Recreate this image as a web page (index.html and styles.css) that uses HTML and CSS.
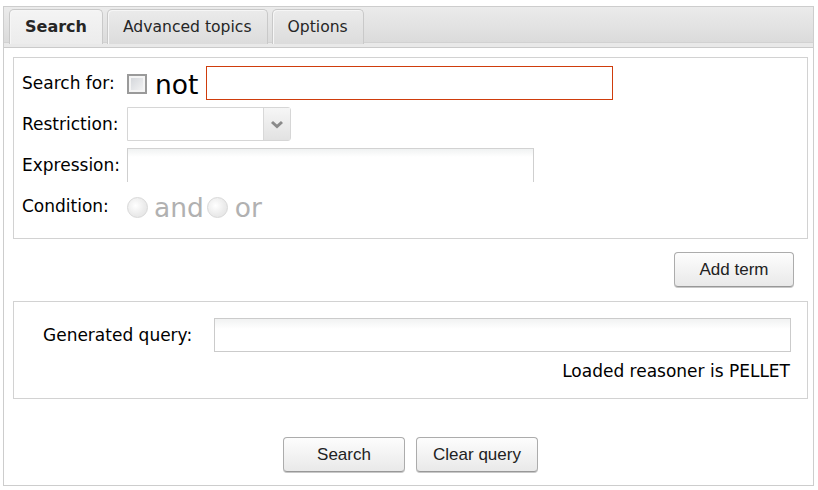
FILE: index.html
```html
<!DOCTYPE html>
<html>
<head>
<meta charset="utf-8">
<link rel="stylesheet" href="styles.css">
</head>
<body>
<div class="widget">
  <div class="tab-bar">
    <div class="tab active">Search</div>
    <div class="tab">Advanced topics</div>
    <div class="tab">Options</div>
  </div>
  <div class="panel">
    <div class="box terms">
      <div class="row">
        <span class="label">Search for:</span>
        <input type="checkbox" class="check">
        <span class="big not">not</span>
        <input type="text" class="text red">
      </div>
      <div class="row">
        <span class="label">Restriction:</span>
        <div class="select"><span class="select-btn"><svg width="14" height="9" viewBox="0 0 14 9"><path d="M2 2 L7 6.5 L12 2" fill="none" stroke="#8a8a8a" stroke-width="3"/></svg></span></div>
      </div>
      <div class="row">
        <span class="label">Expression:</span>
        <input type="text" class="text expr">
      </div>
      <div class="row cond">
        <span class="label">Condition:</span>
        <input type="radio" class="radio" disabled>
        <span class="big grey">and</span>
        <input type="radio" class="radio" disabled>
        <span class="big grey or">or</span>
      </div>
    </div>
    <div class="add-row">
      <button class="btn">Add term</button>
    </div>
    <div class="box query">
      <div class="qrow">
        <span class="qlabel">Generated query:</span>
        <input type="text" class="text qinput">
      </div>
      <div class="reasoner">Loaded reasoner is PELLET</div>
    </div>
    <div class="actions">
      <button class="btn">Search</button>
      <button class="btn">Clear query</button>
    </div>
  </div>
</div>
</body>
</html>
```
FILE: styles.css
```css
* { box-sizing: border-box; }
html, body { margin: 0; padding: 0; background: #fff; }
body {
  padding: 6px 4px 0 3px;
  font-family: "DejaVu Sans", Verdana, sans-serif;
  font-size: 17px;
  color: #000;
}
.widget {
  width: 811px;
  height: 480px;
  border: 1px solid #cdcdcd;
  display: flex;
  flex-direction: column;
}
.tab-bar {
  height: 41px;
  background: linear-gradient(#ebebeb, #d9d9d9);
  border-bottom: 1px solid #cacaca;
  box-shadow: inset 0 -4px 0 #e9e9e9, inset 0 -5px 0 #d2d2d2;
  display: flex;
  align-items: flex-start;
  gap: 4px;
  padding: 2px 0 0 5px;
}
.tab {
  height: 35px;
  padding: 0 15px;
  border: 1px solid #c9c9c9;
  border-bottom: none;
  border-radius: 5px 5px 0 0;
  background: linear-gradient(#ebebeb, #dcdcdc);
  color: #262626;
  font-size: 15.6px;
  line-height: 34px;
  box-shadow: inset 1px 1px 0 #f6f6f6;
}
.tab.active {
  background: linear-gradient(#f4f4f4, #ececec);
  font-weight: bold;
  font-size: 16px;
}
.panel {
  flex: 1;
  padding: 9px 5px 0 9px;
  display: flex;
  flex-direction: column;
}
.box {
  border: 1px solid #d2d2d2;
}
.terms {
  height: 182px;
  padding: 8px 0 0 8px;
  display: flex;
  flex-direction: column;
  gap: 7px;
}
.row {
  display: flex;
  align-items: center;
  height: 34px;
}
.label {
  width: 105px;
  flex: none;
}
.check {
  appearance: none;
  -webkit-appearance: none;
  margin: 1px 0 0 0;
  width: 20px;
  height: 20px;
  border: 2px solid #9a9a9a;
  box-shadow: inset 0 0 0 2px #f4f4f4;
  background: linear-gradient(135deg, #d0d3d8, #f6f6f6);
}
.big {
  font-size: 26.5px;
  line-height: 34px;
}
.not { margin: 3px 8px 0 8px; }
.text {
  margin: 0;
  height: 34px;
  width: 407px;
  border: 1px solid #cfcfcf;
  background: #fff;
  font: inherit;
  outline: none;
}
.red {
  border: 1px solid #cf3d0c;
}
.select {
  width: 164px;
  height: 34px;
  border: 1px solid #d6d6d6;
  border-radius: 0 3px 3px 0;
  display: flex;
  justify-content: flex-end;
  background: #fff;
}
.select-btn {
  width: 27px;
  height: 100%;
  border-left: 1px solid #d8d8d8;
  background: linear-gradient(#f6f6f6, #e2e2e2);
  display: flex;
  align-items: center;
  justify-content: center;
}
.expr {
  border-bottom: none;
  border-top: 1px solid #d2d2d2;
  background: linear-gradient(#f0f2f2, #fff 8px);
}
.radio {
  appearance: none;
  -webkit-appearance: none;
  margin: 2px 0 0 0;
  width: 21px;
  height: 21px;
  border-radius: 50%;
  border: 1px solid #d8d8d8;
  background: radial-gradient(circle at 40% 40%, #fff 0, #ececec 55%, #e0e0e0 100%);
}
.grey { color: #b1b1b1; margin: 3px 3px 0 6px; }
.grey.or { margin-left: 7px; }
.add-row {
  display: flex;
  justify-content: flex-end;
  padding: 13px 14px 14px 0;
}
.btn {
  width: 120px;
  height: 35px;
  margin: 0;
  border: 1px solid #acacac;
  border-bottom-color: #989898;
  border-radius: 4px;
  background: linear-gradient(#fdfdfd, #e9e9e9);
  box-shadow: 0 1px 0 #c8c8c8;
  font-family: "Liberation Sans", Arial, sans-serif;
  font-size: 17px;
  color: #222;
  padding: 0;
}
.query {
  height: 98px;
  padding: 16px 16px 0 29px;
}
.qrow {
  display: flex;
  align-items: center;
  height: 34px;
}
.qlabel { width: 171px; flex: none; }
.qinput {
  width: 577px;
  border: 1px solid #cbcbcb;
  background: linear-gradient(#f1f2f2, #fff 10px);
}
.reasoner {
  text-align: right;
  margin-top: 9px;
  padding-right: 1px;
}
.actions {
  display: flex;
  justify-content: center;
  gap: 11px;
  padding-top: 38px;
}
.actions .btn { width: 122px; }
```
